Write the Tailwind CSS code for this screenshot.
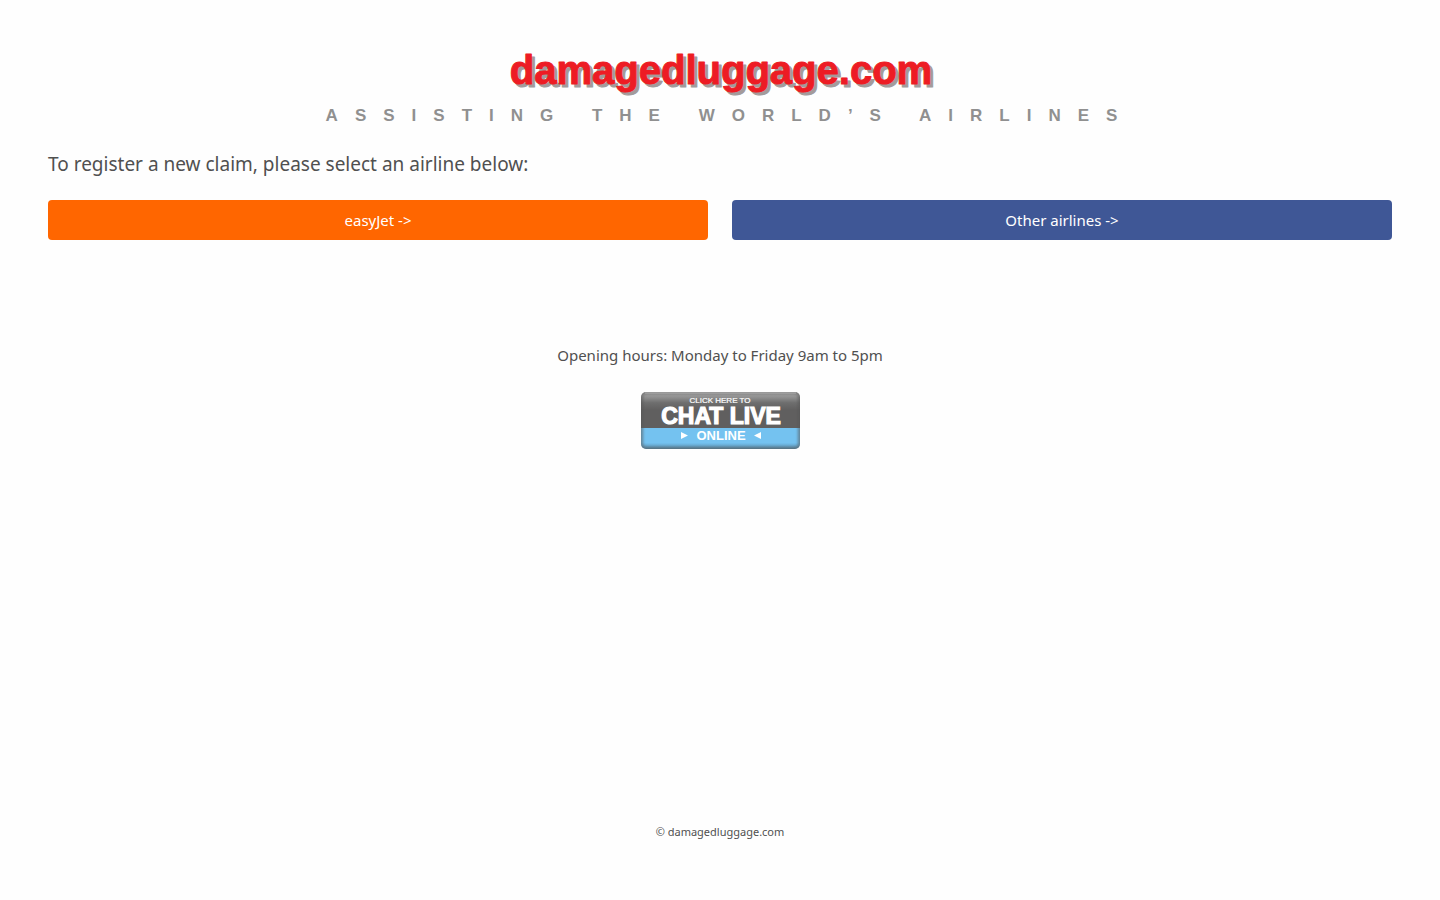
<!DOCTYPE html>
<html lang="en">
<head>
<meta charset="utf-8">
<meta name="viewport" content="width=device-width, initial-scale=1">
<title>damagedluggage.com</title>
<script src="https://cdn.jsdelivr.net/npm/@tailwindcss/browser@4"></script>
</head>
<body class="flex min-h-screen flex-col bg-[#fefefe] px-12 pt-10 font-['Noto_Sans',sans-serif] text-[15px] text-[#505050]">
<header class="flex flex-col items-center">
  <svg class="h-16 w-[440px]" viewBox="0 0 440 64" role="img" aria-label="damagedluggage.com">
    <g font-family="Liberation Sans, Arial, sans-serif" font-size="40" font-weight="700" text-anchor="middle" stroke-width="1" stroke-linejoin="round">
      <text x="224" y="47" fill="#a39b9b" stroke="#a39b9b">damagedluggage.com</text>
      <text x="221" y="44" fill="#ed1c24" stroke="#ed1c24">damagedluggage.com</text>
    </g>
  </svg>
  <p class="pl-5 font-['Liberation_Sans',Arial,sans-serif] text-[17px] leading-6 font-bold tracking-[17px] whitespace-nowrap text-[#909090]">ASSISTING THE WORLD’S AIRLINES</p>
</header>
<main class="flex grow flex-col pt-5">
  <h1 class="text-[19px] leading-8">To register a new claim, please select an airline below:</h1>
  <div class="mt-5 grid grid-cols-2 gap-6">
    <a href="#easyjet" class="flex h-10 items-center justify-center rounded bg-[#ff6600] text-white">easyJet -&gt;</a>
    <a href="#other" class="flex h-10 items-center justify-center rounded bg-[#3f5796] text-white">Other airlines -&gt;</a>
  </div>
  <p class="mt-26 text-center leading-[22px]">Opening hours: Monday to Friday 9am to 5pm</p>
  <button type="button" aria-label="Click here to chat live online" class="mx-auto mt-[26px] block h-[57px] w-[160px]">
    <svg class="block h-full w-full" viewBox="0 0 160 57">
      <defs>
        <linearGradient id="top" x1="0" y1="0" x2="0" y2="1"><stop offset="0" stop-color="#b0b0b0"/><stop offset=".3" stop-color="#6e6e6e"/><stop offset=".5" stop-color="#605f5f"/><stop offset="1" stop-color="#605f5f"/></linearGradient>
        <linearGradient id="low" x1="0" y1="0" x2="0" y2="1"><stop offset="0" stop-color="#74c2f0"/><stop offset=".7" stop-color="#74c2f0"/><stop offset="1" stop-color="#5a93b5"/></linearGradient>
        <clipPath id="plate"><rect x="1" width="159" height="57" rx="5"/></clipPath>
        <filter id="soft"><feGaussianBlur stdDeviation="1.5"/></filter>
      </defs>
      <g clip-path="url(#plate)">
        <rect width="160" height="36" fill="url(#top)"/>
        <rect y="36" width="160" height="21" fill="url(#low)"/>
        <rect x="1" y="0" width="159" height="57" rx="5" fill="none" stroke="#555" stroke-opacity=".6" stroke-width="4" filter="url(#soft)"/>
        <rect x="5" y="0" width="151" height="2" fill="#aaa" fill-opacity=".6"/>
      </g>
      <g fill="#fff" font-family="Liberation Sans, Arial, sans-serif" text-anchor="middle">
        <text x="80" y="11" font-size="8" stroke="#fff" stroke-width=".2">CLICK HERE TO</text>
        <text x="81" y="32" font-size="23" font-weight="700" stroke="#fff" stroke-width="1.200">CHAT LIVE</text>
        <text x="81" y="48" font-size="13" font-weight="700">ONLINE</text>
        <path d="M41 40 48 43.500 41 47ZM121 40 114 43.500 121 47Z"/>
      </g>
    </svg>
  </button>
</main>
<footer class="pb-[60px] text-center text-[11px] leading-4">© damagedluggage.com</footer>
</body>
</html>
